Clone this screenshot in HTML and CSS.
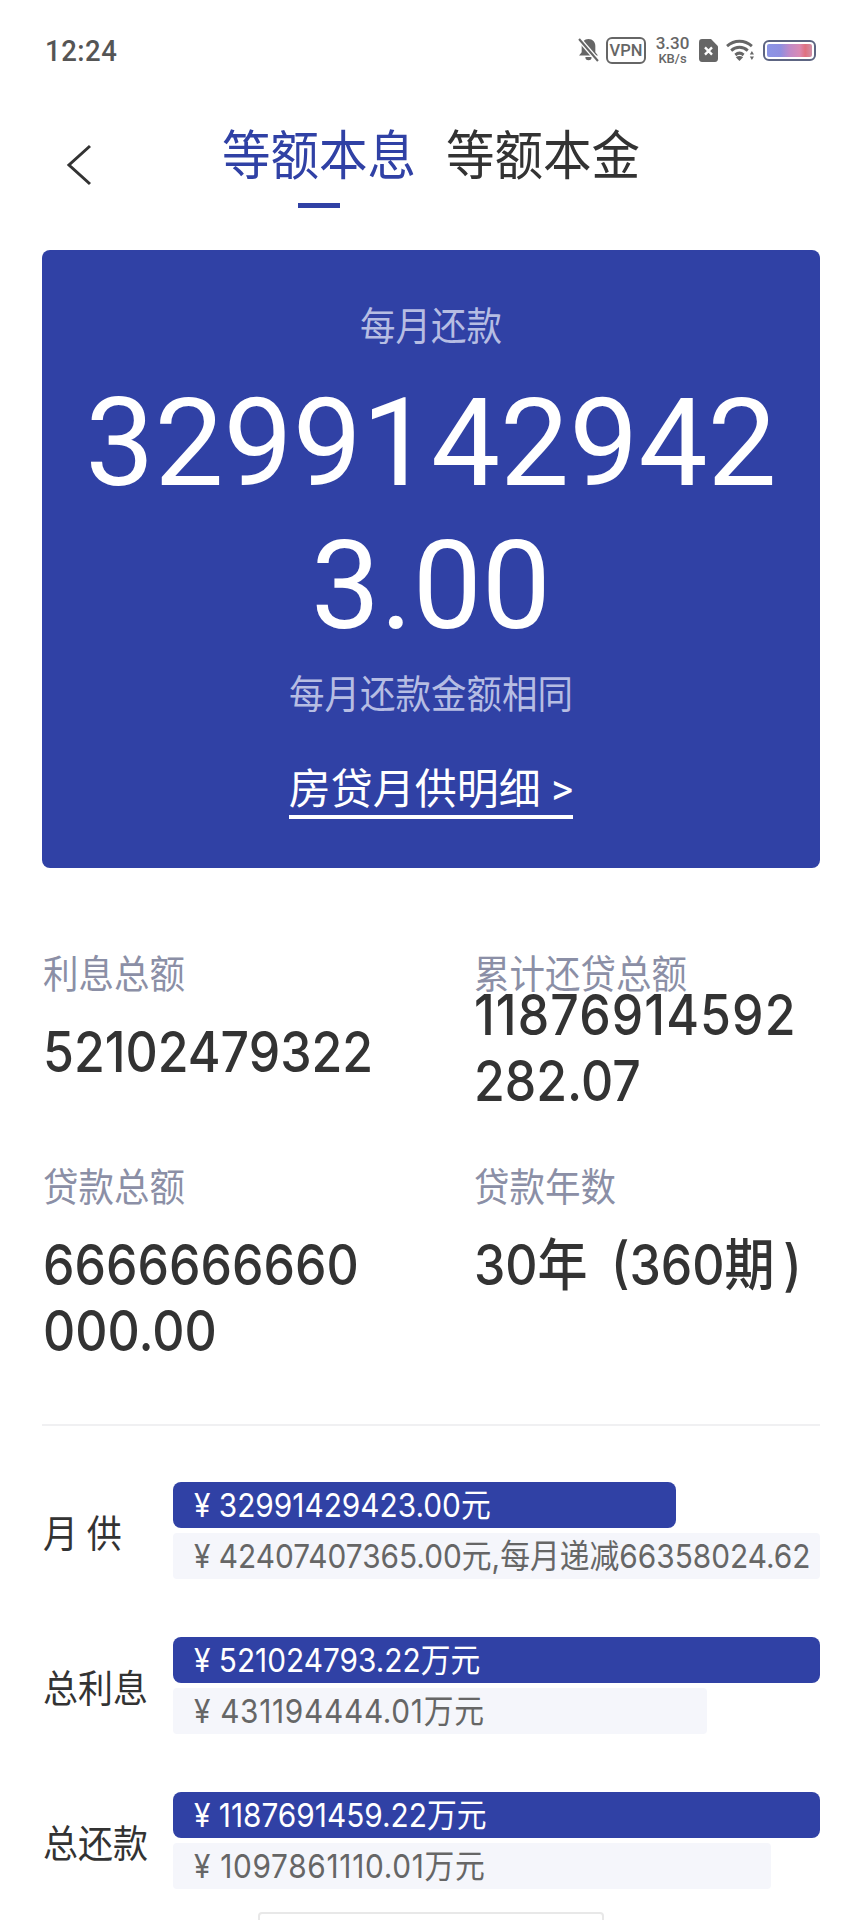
FILE: index.html
```html
<!DOCTYPE html>
<html>
<head>
<meta name="viewport" content="width=device-width, initial-scale=1">
<link rel="stylesheet" href="styles.css">
</head>
<body>

<div class="statusbar">
  <span class="time">12:24</span>
  <div class="status-icons">
    <svg class="ic-bell" width="21" height="24" viewBox="0 0 20 22" preserveAspectRatio="none">
      <path d="M10 1c-4 0-6.500 3-6.500 6v6l-2.500 3h18l-2.500-3V7c0-3-2.500-6-6.500-6z" fill="#666"/>
      <path d="M7 17.500a3 3 0 0 0 6 0z" fill="#666"/>
      <path d="M1 1l18 20" stroke="#fff" stroke-width="4.500"/>
      <path d="M1 1l18 20" stroke="#666" stroke-width="2"/>
    </svg>
    <span class="vpn">VPN</span>
    <div class="speed"><span>3.30</span><small>KB/s</small></div>
    <svg class="ic-sim" width="19" height="23" viewBox="0 0 19 22" preserveAspectRatio="none">
      <path d="M3 0h9l7 7v12a3 3 0 0 1-3 3H3a3 3 0 0 1-3-3V3a3 3 0 0 1 3-3z" fill="#666"/>
      <path d="M6 8l7 7M13 8l-7 7" stroke="#fff" stroke-width="2.400"/>
    </svg>
    <svg class="ic-wifi" width="29" height="22" viewBox="0 0 28 20" preserveAspectRatio="none">
      <path d="M1 6.500c7-6 17-6 24 0M5 10.500c4.500-4 11.500-4 16 0M9 14.500c2.500-2 5.500-2 8 0" fill="none" stroke="#666" stroke-width="2.800"/>
      <path d="M13 20l-3.500-3.500c2.300-1.500 4.700-1.500 7 0z" fill="#666"/>
      <path d="M25 11l2 3h-4zM25 19l2-3h-4z" fill="#666"/>
    </svg>
    <div class="battery"><div class="battery-fill"></div></div>
  </div>
</div>

<div class="topnav">
  <svg class="back" width="28" height="42" viewBox="0 0 28 42">
    <path d="M25 2L4 21l21 19" fill="none" stroke="#333" stroke-width="3"/>
  </svg>
  <div class="tabs">
    <div class="tab active"><span class="tall">等额本息</span><i></i></div>
    <div class="tab"><span class="tall">等额本金</span></div>
  </div>
</div>

<div class="card">
  <div class="card-label">每月还款</div>
  <div class="card-amount">32991429423.00</div>
  <div class="card-note">每月还款金额相同</div>
  <a class="card-link">房贷月供明细 &gt;</a>
</div>

<div class="stats">
  <div class="stat">
    <div class="stat-label">利息总额</div>
    <div class="stat-value">52102479322</div>
  </div>
  <div class="stat tight">
    <div class="stat-label">累计还贷总额</div>
    <div class="stat-value"><span class="wide">11876914592</span><br>282.07</div>
  </div>
  <div class="stat">
    <div class="stat-label">贷款总额</div>
    <div class="stat-value">6666666660<br>000.00</div>
  </div>
  <div class="stat">
    <div class="stat-label">贷款年数</div>
    <div class="stat-value years">30年 (360期&thinsp;)</div>
  </div>
</div>

<hr class="divider">

<div class="compare">
  <div class="compare-row">
    <div class="compare-name">月 供</div>
    <div class="bars">
      <div class="bar dark" style="width:77.800%"><span class="tall">¥ 32991429423.00元</span></div>
      <div class="bar pale" style="width:100%"><span class="tall">¥ 42407407365.00元,每月递减66358024.62</span></div>
    </div>
  </div>
  <div class="compare-row">
    <div class="compare-name">总利息</div>
    <div class="bars">
      <div class="bar dark" style="width:100%"><span class="tall">¥ 521024793.22万元</span></div>
      <div class="bar pale" style="width:82.500%"><span class="tall spaced">¥ 431194444.01万元</span></div>
    </div>
  </div>
  <div class="compare-row">
    <div class="compare-name">总还款</div>
    <div class="bars">
      <div class="bar dark" style="width:100%"><span class="tall">¥ 1187691459.22万元</span></div>
      <div class="bar pale" style="width:92.500%"><span class="tall spaced">¥ 1097861110.01万元</span></div>
    </div>
  </div>
</div>

<div class="sheet-edge"></div>

</body>
</html>
```

FILE: styles.css
```css
* {
  box-sizing: border-box;
}

html, body {
  margin: 0;
  height: 1920px;
  overflow: hidden;
}

body {
  position: relative;
  background: #fff;
  color: #333;
  font-family: Roboto, "Noto Sans CJK SC", sans-serif;
}

/* the reference is a little stretched vertically */
.tall {
  display: inline-block;
  transform: scaleY(1.1);
}

.statusbar {
  height: 100px;
  padding: 0 45px;
  display: flex;
  align-items: center;
  justify-content: space-between;
}

.time {
  font-size: 27.500px;
  color: #555;
  font-weight: 500;
  letter-spacing: 0.5px;
  transform: scaleY(1.08);
}

.status-icons {
  display: flex;
  align-items: center;
}

.vpn {
  margin-left: 7px;
  width: 40px;
  height: 27px;
  border: 2px solid #666;
  border-radius: 6px;
  color: #666;
  font-size: 16.500px;
  font-weight: 500;
  line-height: 23px;
  text-align: center;
}

.speed {
  margin-left: 9px;
  width: 35px;
  color: #666;
  font-size: 17px;
  line-height: 17px;
  text-align: center;
  font-weight: 500;
}

.speed span, .speed small {
  display: block;
}

.speed small {
  font-size: 13px;
  line-height: 13px;
  font-weight: 500;
}

.ic-sim {
  margin-left: 9px;
}

.ic-wifi {
  margin-left: 8px;
}

.battery {
  margin-left: 8px;
  width: 53px;
  height: 21px;
  padding: 2px;
  border: 2px solid #5d6582;
  border-radius: 6px;
}

.battery-fill {
  height: 100%;
  border-radius: 2px;
  background: linear-gradient(90deg, #8b95e6 0%, #8f8fe0 30%, #c08ac8 50%, #d98ab5 72%, #e0707f 85%, #cf90a8 100%);
}

.topnav {
  height: 108px;
  position: relative;
}

.back {
  position: absolute;
  left: 65px;
  top: 44px;
}

.tabs {
  display: flex;
  gap: 30px;
  padding-left: 222px;
  padding-top: 28px;
}

.tab {
  position: relative;
  font-size: 48.500px;
  line-height: 58px;
  color: #333;
}

.tab.active {
  color: #3041a5;
}

.tab i {
  position: absolute;
  left: 76px;
  top: 75px;
  width: 42px;
  height: 5px;
  background: #3041a5;
}

.card {
  margin: 42px 41px 0 42px;
  height: 618px;
  padding-top: 52px;
  border-radius: 8px;
  background: #3041a5;
  color: #fff;
  text-align: center;
}

.card-label {
  font-size: 35.500px;
  line-height: 50px;
  color: #b6bde3;
  transform: scaleY(1.08);
}

.card-amount {
  width: 720px;
  margin: 20px auto 0;
  font-size: 123px;
  line-height: 143px;
  word-break: break-all;
}

.card-note {
  margin-top: 12px;
  font-size: 35.500px;
  line-height: 50px;
  color: #b6bde3;
  transform: scaleY(1.08);
}

.card-link {
  display: inline-block;
  margin-top: 45px;
  border-bottom: 4px solid #fff;
  font-size: 42px;
  line-height: 50px;
}

.stats {
  display: grid;
  grid-template-columns: 431px 1fr;
  margin-top: 82px;
  padding-left: 43px;
  padding-bottom: 48px;
}

.stat {
  height: 213px;
}

.stat-label {
  font-size: 35.500px;
  line-height: 50px;
  color: #8b8fa6;
  transform: scaleY(1.08);
}

/* line-height is scaled by the transform too, 59 comes out as 66 */
.stat-value {
  margin-top: 19px;
  font-family: Inter, "Noto Sans CJK SC", sans-serif;
  font-size: 50px;
  line-height: 59px;
  font-weight: 500;
  color: #333;
  transform: scaleY(1.12);
  transform-origin: top;
}

.stat.tight .stat-value {
  margin-top: -18px;
}

.stat-value.years {
  word-spacing: 10px;
}

.wide {
  letter-spacing: 1.100px;
}

.divider {
  margin: 0 41px 0 42px;
  border: 0;
  border-top: 2px solid #f0f0f2;
}

.compare {
  margin-top: 56px;
  display: flex;
  flex-direction: column;
  gap: 58px;
  padding: 0 41px 0 43px;
}

.compare-row {
  display: flex;
  align-items: center;
}

.compare-name {
  width: 130px;
  flex: none;
  font-size: 35px;
  color: #333;
  transform: scaleY(1.08);
  transform-origin: left center;
}

.bars {
  flex: 1;
  display: flex;
  flex-direction: column;
  gap: 5px;
}

.bar {
  height: 46px;
  padding-left: 21px;
  font-family: Inter, "Noto Sans CJK SC", sans-serif;
  font-size: 29.800px;
  line-height: 46px;
  white-space: nowrap;
}

.spaced {
  letter-spacing: 0.700px;
}

.bar.dark {
  border-radius: 8px;
  background: #3041a5;
  color: #fff;
}

.bar.pale {
  border-radius: 4px;
  background: #f5f6fb;
  color: #666;
}

.sheet-edge {
  position: absolute;
  left: 258px;
  top: 1912px;
  width: 346px;
  height: 12px;
  border: 2px solid #e8e8e8;
  border-radius: 4px;
  background: #fff;
}
```
